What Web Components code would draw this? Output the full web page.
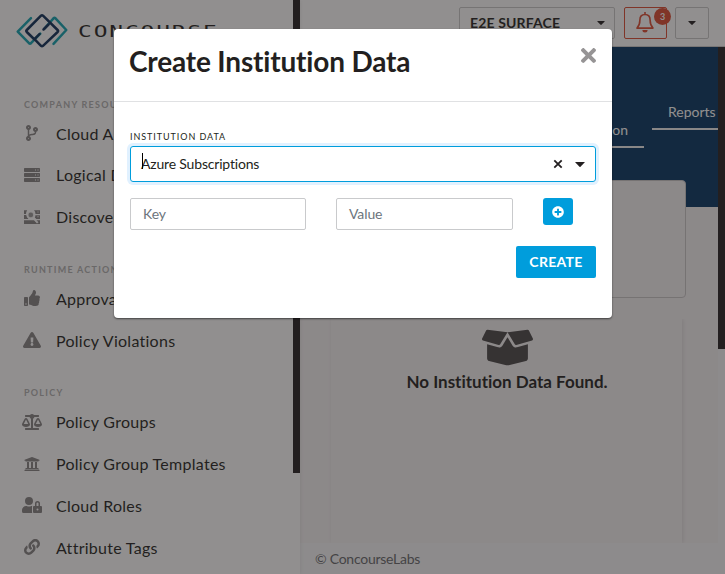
<!DOCTYPE html>
<html lang="en">
<head>
<meta charset="utf-8">
<title>Concourse - Create Institution Data</title>
<style>
html,body{margin:0;width:725px;height:574px;overflow:hidden;background:#fff;font-family:Lato,"Liberation Sans",sans-serif;color:#231f20;font-variant-ligatures:none}
</style>
</head>
<body>
<concourse-app></concourse-app>
<script>
const ICONS={
branch:['0 0 384 512','<path d="M384 144c0-44.2-35.8-80-80-80s-80 35.8-80 80c0 36.4 24.3 67.1 57.5 76.8-.6 16.1-4.2 28.5-11 36.9-15.4 19.2-49.3 22.4-85.2 25.7-28.2 2.6-57.4 5.4-81.3 16.9v-144c32.5-10.2 56-40.5 56-76.3 0-44.2-35.8-80-80-80S0 35.8 0 80c0 35.8 23.5 66.1 56 76.3v199.3C23.5 365.9 0 396.2 0 432c0 44.2 35.8 80 80 80s80-35.8 80-80c0-34-21.2-63.1-51.2-74.6 3.1-5.2 7.8-9.8 14.9-13.4 16.2-8.2 40.4-10.4 66.1-12.8 42.2-3.9 90-8.4 118.2-43.4 14-17.4 21.1-39.8 21.6-67.9 31.6-10.8 54.4-40.7 54.4-75.9zM80 64c8.8 0 16 7.2 16 16s-7.2 16-16 16-16-7.2-16-16 7.2-16 16-16zm0 384c-8.8 0-16-7.2-16-16s7.2-16 16-16 16 7.2 16 16-7.2 16-16 16zm224-320c8.8 0 16 7.2 16 16s-7.2 16-16 16-16-7.2-16-16 7.2-16 16-16z"/>'],
server:['0 0 16 16','<path fill-rule="evenodd" d="M.7 1h14.6q.7 0 .7.7v2.6q0 .7-.7.7H.7Q0 5 0 4.300V1.700Q0 1 .7 1zM.7 6h14.600q.7 0 .7.7v2.600q0 .7-.7.7H.7q-.7 0-.7-.7V6.700Q0 6 .7 6zM.7 11h14.600q.7 0 .7.7v2.600q0 .7-.7.7H.7q-.7 0-.7-.7v-2.600q0-.7.7-.7zM11 2.500v1h1v-1zm2.500 0v1h1v-1zM11 7.500v1h1v-1zm2.500 0v1h1v-1zM11 12.500v1h1v-1zm2.500 0v1h1v-1z"/>'],
discover:['0 0 16 16','<path fill-rule="evenodd" d="M0 1.300h3.200Q2 3 2 5H0zM10 1.300h6V5h-4.500Q11.400 2.600 10 1.300zm3.500 1.200v1h1v-1zM0 6h2.200q.4 2.500 2.300 4H0zM11.400 6.200H16V10h-3.700l-1.500-1.600q.6-1 .6-2.200zm2.100 1.100v1h1v-1zM0 11.200h10l3 3.200.9-.9-2-2.300H16v3.800H0z"/><circle cx="6.800" cy="5.900" r="3.100" fill="#999" stroke="#fff" stroke-opacity=".85" stroke-width="1.500"/><path d="m9.200 8.500 4.800 5.300" stroke="#fff" stroke-opacity=".85" stroke-width="1.500"/>'],
thumb:['0 0 512 512','<path d="M104 224H24c-13.255 0-24 10.745-24 24v240c0 13.255 10.745 24 24 24h80c13.255 0 24-10.745 24-24V248c0-13.255-10.745-24-24-24zM64 472c-13.255 0-24-10.745-24-24s10.745-24 24-24 24 10.745 24 24-10.745 24-24 24zM384 81.452c0 42.416-25.970 66.208-33.277 94.548h101.723c33.397 0 59.397 27.746 59.553 58.098.084 17.938-7.546 37.249-19.439 49.197l-.11.11c9.836 23.337 8.237 56.037-9.308 79.469 8.681 25.895-.069 57.704-16.382 74.757 4.298 17.598 2.244 32.575-6.148 44.632C440.202 511.587 389.616 512 346.839 512l-2.845-.001c-48.287-.017-87.806-17.598-119.560-31.725-15.957-7.099-36.821-15.887-52.651-16.178-6.540-.12-11.783-5.457-11.783-11.998v-213.770c0-3.200 1.282-6.271 3.558-8.521 39.614-39.144 56.648-80.587 89.117-113.111 14.804-14.832 20.188-37.236 25.393-58.902C282.515 39.293 291.817 0 312 0c24 0 72 8 72 81.452z"/>'],
warning:['0 0 576 512','<path d="M569.517 440.013C587.975 472.007 564.806 512 527.940 512H48.054c-36.937 0-59.999-40.055-41.577-71.987L246.423 23.985c18.467-32.009 64.720-31.951 83.154 0l239.940 416.028zM288 354c-25.405 0-46 20.595-46 46s20.595 46 46 46 46-20.595 46-46-20.595-46-46-46zm-43.673-165.346l7.418 136c.347 6.364 5.609 11.346 11.982 11.346h48.546c6.373 0 11.635-4.982 11.982-11.346l7.418-136c.375-6.874-5.098-12.654-11.982-12.654h-63.383c-6.884 0-12.356 5.780-11.981 12.654z"/>'],
scale:['0 0 640 512','<path d="M256 336h-.02c0-16.180 1.340-8.730-85.050-181.510-17.650-35.290-68.190-35.360-85.870 0C-2.060 328.750.02 320.330.02 336H0c0 44.180 57.310 80 128 80s128-35.820 128-80zM128 176l72 144H56l72-144zm511.980 160c0-16.180 1.340-8.730-85.050-181.510-17.650-35.290-68.190-35.360-85.870 0-87.120 174.260-85.040 165.840-85.040 181.510H384c0 44.180 57.310 80 128 80s128-35.820 128-80h-.02zM440 320l72-144 72 144H440zm88 128H352V153.250c23.510-10.290 41.160-31.480 46.390-57.250H528c8.840 0 16-7.160 16-16V48c0-8.840-7.160-16-16-16H383.640C369.040 12.680 346.090 0 320 0s-49.040 12.680-63.640 32H112c-8.840 0-16 7.160-16 16v32c0 8.840 7.160 16 16 16h129.610c5.230 25.760 22.870 46.960 46.390 57.250V448H112c-8.840 0-16 7.160-16 16v32c0 8.840 7.160 16 16 16h416c8.840 0 16-7.160 16-16v-32c0-8.840-7.160-16-16-16z"/>'],
bank:['0 0 512 512','<path d="M496 128v16a8 8 0 0 1-8 8h-24v12c0 6.627-5.373 12-12 12H60c-6.627 0-12-5.373-12-12v-12H24a8 8 0 0 1-8-8v-16a8 8 0 0 1 4.941-7.392l232-88a7.996 7.996 0 0 1 6.118 0l232 88A8 8 0 0 1 496 128zm-24 304H40c-13.255 0-24 10.745-24 24v16a8 8 0 0 0 8 8h464a8 8 0 0 0 8-8v-16c0-13.255-10.745-24-24-24zM96 192v192H60c-6.627 0-12 5.373-12 12v20h416v-20c0-6.627-5.373-12-12-12h-36V192h-64v192h-64V192h-64v192h-64V192H96z"/>'],
userlock:['0 0 640 512','<path d="M224 256A128 128 0 1 0 96 128a128 128 0 0 0 128 128zm96 64a63.080 63.080 0 0 1 8.100-30.500c-4.800-.5-9.500-1.500-14.500-1.500h-16.700a174.080 174.080 0 0 1-145.800 0h-16.700A134.430 134.430 0 0 0 0 422.400V464a48 48 0 0 0 48 48h280.900a63.540 63.540 0 0 1-8.900-32zm288-32h-32v-80a80 80 0 0 0-160 0v80h-32a32 32 0 0 0-32 32v160a32 32 0 0 0 32 32h224a32 32 0 0 0 32-32V320a32 32 0 0 0-32-32zM496 432a32 32 0 1 1 32-32 32 32 0 0 1-32 32zm32-144h-64v-80a32 32 0 0 1 64 0z"/>'],
link:['0 0 512 512','<path d="M326.612 185.391c59.747 59.809 58.927 155.698.36 214.590-.11.12-.24.25-.36.37l-67.200 67.200c-59.270 59.270-155.699 59.262-214.960 0-59.270-59.260-59.270-155.700 0-214.960l37.106-37.106c9.840-9.840 26.786-3.300 27.294 10.606.648 17.722 3.826 35.527 9.690 52.721 1.986 5.822.567 12.262-3.783 16.612l-13.087 13.087c-28.026 28.026-28.905 73.660-1.155 101.960 28.024 28.579 74.086 28.749 102.325.51l67.200-67.190c28.191-28.191 28.073-73.757 0-101.830-3.701-3.694-7.429-6.564-10.341-8.569a16.037 16.037 0 0 1-6.947-12.606c-.396-10.567 3.348-21.456 11.698-29.806l21.054-21.055c5.521-5.521 14.182-6.199 20.584-1.731a152.482 152.482 0 0 1 20.522 17.197zM467.547 44.449c-59.261-59.262-155.690-59.270-214.960 0l-67.200 67.200c-.12.12-.25.25-.36.37-58.566 58.892-59.387 154.781.36 214.590a152.454 152.454 0 0 0 20.521 17.196c6.402 4.468 15.064 3.789 20.584-1.731l21.054-21.055c8.350-8.350 12.094-19.239 11.698-29.806a16.037 16.037 0 0 0-6.947-12.606c-2.912-2.005-6.640-4.875-10.341-8.569-28.073-28.073-28.191-73.639 0-101.830l67.200-67.190c28.239-28.239 74.300-28.069 102.325.51 27.750 28.300 26.872 73.934-1.155 101.960l-13.087 13.087c-4.350 4.350-5.769 10.790-3.783 16.612 5.864 17.194 9.042 34.999 9.690 52.721.509 13.906 17.454 20.446 27.294 10.606l37.106-37.106c59.271-59.259 59.271-155.699.001-214.959z"/>'],
box:['0 0 640 512','<path d="M425.700 256c-16.900 0-32.800-9-41.400-23.400L320 126l-64.200 106.600c-8.700 14.500-24.600 23.500-41.500 23.500-4.500 0-9-.6-13.300-1.900L64 215v178c0 14.700 10 27.500 24.200 31l216.200 54.100c10.200 2.500 20.900 2.500 31 0L551.800 424c14.200-3.600 24.200-16.400 24.200-31V215l-137 39.100c-4.300 1.300-8.800 1.900-13.300 1.900zm212.600-112.200L586.800 41c-3.100-6.200-9.800-9.800-16.700-8.900L320 64l91.700 152.100c3.800 6.300 11.400 9.300 18.500 7.300l197.900-56.500c9.900-2.900 14.700-13.900 10.200-23.100zM53.200 41L1.700 143.800c-4.600 9.200.3 20.200 10.100 23l197.900 56.500c7.100 2 14.700-1 18.500-7.300L320 64 69.800 32.100c-6.900-.8-13.500 2.700-16.600 8.900z"/>'],
plus:['0 0 512 512','<path d="M256 8C119 8 8 119 8 256s111 248 248 248 248-111 248-248S393 8 256 8zm144 276c0 6.600-5.400 12-12 12h-92v92c0 6.600-5.400 12-12 12h-56c-6.600 0-12-5.400-12-12v-92h-92c-6.600 0-12-5.400-12-12v-56c0-6.600 5.400-12 12-12h92v-92c0-6.600 5.400-12 12-12h56c6.600 0 12 5.400 12 12v92h92c6.600 0 12 5.400 12 12v56z"/>'],
times:['0 80 352 352','<path d="M242.720 256l100.070-100.070c12.280-12.280 12.280-32.190 0-44.480l-22.240-22.240c-12.280-12.280-32.190-12.280-44.480 0L176 189.280 75.930 89.210c-12.280-12.280-32.190-12.280-44.480 0L9.210 111.450c-12.280 12.280-12.280 32.190 0 44.480L109.280 256 9.210 356.070c-12.280 12.280-12.280 32.190 0 44.480l22.240 22.240c12.280 12.280 32.200 12.280 44.480 0L176 322.720l100.070 100.070c12.280 12.280 32.200 12.280 44.480 0l22.240-22.240c12.280-12.280 12.280-32.190 0-44.480L242.720 256z"/>'],
clear:['0 0 10 10','<path d="M1.300 1.300l7.400 7.400M8.700 1.300L1.300 8.700" fill="none" stroke="currentColor" stroke-width="1.800"/>'],
caret:['0 0 10 5','<path d="M.6 0h8.800q.6 0 .2.5L5.500 4.700q-.5.5-1 0L.4.5Q0 0 .6 0z"/>'],
bell:['0 0 18 21','<path d="M9 0v2.500M1 16.100h16c-2.200-2.200-2.900-3.700-2.900-8C14.100 4.500 12 2.500 9 2.500S3.900 4.500 3.900 8.100c0 4.300-.7 5.800-2.900 8z" fill="none" stroke="currentColor" stroke-width="1.600" stroke-linejoin="round"/><path d="M6.400 18h5.200a2.600 2.500 0 0 1-5.200 0z"/>'],
logo:['0 0 52 36','<g fill="none" stroke-width="2.500" stroke-linecap="round" stroke-linejoin="round"><path stroke="#0fa3b1" d="M15 5.200 1.700 18.600 13 30.200q1 .9 2 0l9.300-9.500M28.500 15.500l9-10.200q1-.9 2 0L50.300 17 37.500 30.800"/><path stroke="#0b2c56" d="m23.500 21-5 5.200L25 32.800q1 .9 2 0L41.600 19q1-1 0-2L27 2.700q-1-.9-2 0L10.800 17q-1 1 0 2l7.700 7.500M27.500 16.500l5-5"/></g>']
};
const define=(name,markup,setup)=>customElements.define(name,class extends HTMLElement{
 constructor(){super();const t=document.createElement('template');t.innerHTML=markup;this.attachShadow({mode:'open'}).append(t.content.cloneNode(true));}
 connectedCallback(){if(setup)setup(this,this.shadowRoot);}
});
define('c-icon','<style>:host{display:inline-block;flex:none}svg{display:block;width:100%;height:100%;fill:currentColor;overflow:visible}</style><svg></svg>',(el,r)=>{const icon=ICONS[el.getAttribute('name')];if(!icon)return;const s=r.querySelector('svg');s.setAttribute('viewBox',icon[0]);s.innerHTML=icon[1];});
define('nav-item',`<style>:host{display:flex;align-items:center;height:41.7px;font-size:16px;letter-spacing:.27px;white-space:nowrap}
span{width:20px;margin:0 14px 0 22px;display:flex;justify-content:center;color:#848283}c-icon{height:16px}</style><span></span><slot></slot>`,(el,r)=>{const i=document.createElement('c-icon');i.style.width=(el.getAttribute('w')||16)+'px';i.setAttribute('name',el.getAttribute('icon'));r.querySelector('span').replaceChildren(i);});
define('nav-group',`<style>:host{display:block;padding-bottom:.38px}h3{box-sizing:border-box;height:40.2px;margin:0 0 -.38px;padding:23px 0 0 24px;font:700 9px/17px Lato,sans-serif;letter-spacing:1.25px;color:#b0b0b0;white-space:nowrap}</style><h3></h3><slot></slot>`,(el,r)=>r.querySelector('h3').textContent=el.getAttribute('label'));
define('side-bar',`<style>:host{display:flex;width:300px;height:574px;background:#fff;box-shadow:0 0 4px rgba(0,0,0,.1);z-index:1}
.main{width:293px}.brand{height:72.52px;display:flex;align-items:flex-start}.brand c-icon{width:52px;height:36px;margin:13px 10px 0 16px}
.word{font:200 16px/20px "DejaVu Sans Mono","Liberation Mono",monospace;letter-spacing:1.3px;margin-top:22px;transform:scaleX(1.43);transform-origin:left}
.thumb{width:7px;height:473px;background:#231f20}</style>
<div class="main"><div class="brand"><c-icon name="logo"></c-icon><div class="word">CONCOURSE</div></div>
<nav-group label="COMPANY RESOUR"><nav-item icon="branch" w="12">Cloud A</nav-item><nav-item icon="server">Logical D</nav-item><nav-item icon="discover">Discovery</nav-item></nav-group>
<nav-group label="RUNTIME ACTIONS"><nav-item icon="thumb">Approvals</nav-item><nav-item icon="warning" w="18">Policy Violations</nav-item></nav-group>
<nav-group label="POLICY"><nav-item icon="scale" w="20">Policy Groups</nav-item><nav-item icon="bank">Policy Group Templates</nav-item><nav-item icon="userlock" w="20">Cloud Roles</nav-item><nav-item icon="link">Attribute Tags</nav-item></nav-group></div><div class="thumb"></div>`);
define('top-bar',`<style>:host{box-sizing:border-box;display:flex;height:47px;padding:7px 16px 0 0;justify-content:flex-end;background:#fff;border-bottom:1px solid #ccc}
.b{box-sizing:border-box;height:32px;border:1px solid #c8c8c8;border-radius:2px;display:flex;align-items:center;justify-content:center}
.org{width:156px;justify-content:space-between;padding:0 9px 1px 10px;font-weight:700;font-size:14px;letter-spacing:.15px}.org c-icon,.u c-icon{width:8px;height:4px}
.bell{width:43px;margin:0 8px 0 9px;border-color:#dc4b30;color:#dc4b30;position:relative}.bell c-icon{width:18px;height:21px;margin:0 2px 1px 0}
.n{position:absolute;right:-5px;top:0;width:17px;height:17px;border-radius:50%;background:#dc4b30;color:#fff;font:700 9px/17px Lato,sans-serif;text-align:center}.u{width:34px}</style>
<div class="b org">E2E SURFACE<c-icon name="caret"></c-icon></div><div class="b bell"><c-icon name="bell"></c-icon><div class="n">3</div></div><div class="b u"><c-icon name="caret"></c-icon></div>`);
define('tab-link',`<style>:host{box-sizing:border-box;display:block;font-weight:400;font-size:14px;line-height:22px;height:29px;border-bottom:2px solid #eee;color:#fff;white-space:nowrap}</style><slot></slot>`);
define('page-hero',`<style>:host{box-sizing:border-box;display:flex;height:160px;justify-content:flex-end;background:#033360;align-items:flex-start;padding-top:54px}
.a{width:112px;margin:18px 8px 0 0;padding-right:16px;text-align:right}.r{width:66px;padding-left:16px}</style><tab-link class="a">Institution</tab-link><tab-link class="r">Reports</tab-link>`);
define('empty-state',`<style>:host{box-sizing:border-box;display:flex;flex-direction:column;align-items:center;width:351px;height:224px;margin:21px 0 0 31px;background:#f5f2f3;padding:8px 0 0 1px;box-shadow:1px 0 4px rgba(0,0,0,.1);clip-path:inset(0 -8px 0 -8px)}
c-icon{width:51px;height:41px;color:#494647}b{font-size:17px;line-height:22px;margin-top:3px;letter-spacing:0}</style><c-icon name="box"></c-icon><b>No Institution Data Found.</b>`);
define('main-area',`<style>:host{display:flex;width:425px;height:574px;flex-direction:column}.body{display:flex;height:527px}.page{width:418px;background:#f5f2f3}
.card{box-sizing:border-box;width:371px;height:118px;margin:-27px 0 0 15px;border:1px solid #c9c6c7;border-radius:4px;background:#f5f2f3}
footer{height:31px;background:#f6f7f8;font-size:14px;line-height:32px;padding-left:15px;color:#66676b;letter-spacing:-.25px}.track{width:7px;background:#f6f7f8}.track div{height:302px;background:#231f20}</style>
<top-bar></top-bar><div class="body"><div class="page"><page-hero></page-hero><div class="card"></div><empty-state></empty-state><footer>© ConcourseLabs</footer></div><div class="track"><div></div></div></div>`);
define('data-field',`<style>:host{box-sizing:border-box;display:flex;align-items:center;width:177px;height:32px;border:1px solid #c9cacc;border-radius:2px;padding:0 0 2px 12px;font-size:14px;letter-spacing:-.1px;color:#6c757d}</style><slot></slot>`);
define('data-select',`<style>:host{box-sizing:border-box;display:flex;align-items:center;height:36px;border:1px solid #009ddc;border-radius:3px;box-shadow:0 0 0 3px #e1f1ff;padding:0 10px 0 10px;font-size:14px;line-height:20px;letter-spacing:-.18px}
.v{flex:1;position:relative}.v i{position:absolute;left:1px;top:0;width:1px;height:16px;background:#000;margin-top:-1px}.x{width:10px;height:10px;margin-right:12px}.c{width:10px;height:5px}</style><div class="v"><slot></slot><i></i></div><c-icon class="x" name="clear"></c-icon><c-icon class="c" name="caret"></c-icon>`);
define('data-modal',`<style>:host{box-sizing:border-box;display:block;width:498px;height:289px;background:#fff;border-radius:4px;box-shadow:0 1px 2px rgba(0,0,0,.55)}
header{box-sizing:border-box;height:73px;border-bottom:1px solid #e0e1e3;display:flex;justify-content:space-between;align-items:flex-start;padding:15px 16px 0 15px}
h1{margin:0;font-size:28px;line-height:34px;font-weight:700;letter-spacing:-.17px}.close{width:15px;height:15px;margin-top:4px;color:#969495}
.form{padding:27px 16px 0}label{display:block;font-size:9px;line-height:16px;letter-spacing:.93px;margin-bottom:1px}.row{display:flex;align-items:flex-start;margin-top:16px}.row data-field:first-child{width:176px}.row data-field+data-field{margin:0 30px}
button{border:0;background:#009ddc;color:#fff;padding:0;display:flex;align-items:center;justify-content:center}.add{width:30px;height:27px;border-radius:3px}.add c-icon{width:12px;height:12px}.create{width:80px;height:32px;border-radius:2px;margin:16px 0 0 auto;padding-bottom:1px;font:700 14px Lato,sans-serif;letter-spacing:.3px}</style>
<header><h1>Create Institution Data</h1><c-icon class="close" name="times"></c-icon></header>
<div class="form"><label>INSTITUTION DATA</label><data-select>Azure Subscriptions</data-select><div class="row"><data-field>Key</data-field><data-field>Value</data-field><button class="add"><c-icon name="plus"></c-icon></button></div><button class="create">CREATE</button></div>`);
define('concourse-app',`<style>:host{display:flex;position:relative;width:725px;height:574px;overflow:hidden}.shade{position:absolute;inset:0;z-index:2;background:rgba(35,31,32,.5);display:flex;justify-content:center;align-items:flex-start;padding:29px 0 0 1px}</style><side-bar></side-bar><main-area></main-area><div class="shade"><data-modal></data-modal></div>`);
</script>
</body>
</html>
